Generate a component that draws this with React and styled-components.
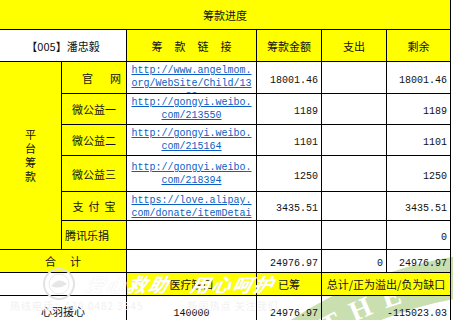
import React from "react";
import styled, { createGlobalStyle } from "styled-components";

const GlobalStyle = createGlobalStyle`
  body {
    margin: 0;
    background: #fff;
  }
`;

const YELLOW = "#ffff00";

const links = [
  { label: "官网", gap: 17, url: "http://www.angelmom.org/WebSite/Child/1388", amount: "18001.46", left: "18001.46", clip: 29 },
  { label: "微公益一", url: "http://gongyi.weibo.com/213550", amount: "1189", left: "1189" },
  { label: "微公益二", url: "http://gongyi.weibo.com/215164", amount: "1101", left: "1101" },
  { label: "微公益三", url: "http://gongyi.weibo.com/218394", amount: "1250", left: "1250" },
  { label: "支付宝", gap: 5, url: "https://love.alipay.com/donate/itemDetail", amount: "3435.51", left: "3435.51", clip: 26 },
];

const heights = [31, 31, 31, 36, 26];

const Frame = styled.div`
  position: relative;
  width: 453px;
  height: 320px;
  overflow: hidden;
`;

const Backdrop = styled.svg`
  position: absolute;
  left: 0;
  top: 0;
  z-index: 0;
`;

const Sheet = styled.table`
  position: relative;
  z-index: 1;
  border-collapse: collapse;
  table-layout: fixed;
  width: 452px;
  margin: -1px 0 0 -1px;
  font-family: "Noto Sans CJK SC", sans-serif;
  font-size: 11px;
  color: #111;
`;

const Row = styled.tr`
  height: ${(p) => p.$h}px;
`;

const Cell = styled.td`
  border: 1px solid #000;
  padding: 0 3px;
  background: ${(p) => (p.$fill ? YELLOW : "transparent")};
  text-align: ${(p) => p.$align || "center"};
  vertical-align: middle;
  overflow: hidden;
  white-space: nowrap;
`;

const Num = styled.span`
  font-family: "Liberation Mono", monospace;
  font-size: 10px;
  display: inline-block;
  padding-top: 3px;
`;

const Spaced = styled.span`
  letter-spacing: ${(p) => p.$gap}px;
  padding-left: ${(p) => p.$gap}px;
`;

const Vertical = styled.span`
  display: inline-block;
  width: 11px;
  white-space: normal;
  word-break: break-all;
  line-height: 14px;
`;

const LinkCell = styled.td`
  border: 1px solid #000;
  padding: 0 4px;
  vertical-align: ${(p) => (p.$clip ? "top" : "middle")};
  text-align: center;
`;

const LinkText = styled.div`
  font-family: "Liberation Mono", monospace;
  font-size: 10px;
  line-height: 13px;
  color: #0b5fc4;
  text-decoration: underline;
  word-break: break-all;
  white-space: normal;
  max-height: ${(p) => (p.$clip ? `${p.$clip}px` : "none")};
  overflow: hidden;
  padding-top: ${(p) => (p.$clip ? "2px" : "0")};
`;

const Stamp = styled.div`
  position: absolute;
  z-index: 2;
  left: 0;
  top: 262px;
  width: 453px;
  height: 58px;
  pointer-events: none;
`;

const Seal = styled.svg`
  position: absolute;
  left: 42px;
  top: 5px;
`;

const Motto = styled.div`
  position: absolute;
  left: 86px;
  top: 8px;
  font-family: "Noto Sans CJK SC", sans-serif;
  font-size: 19px;
  font-weight: 700;
  font-style: italic;
  letter-spacing: 2px;
  color: #fff;
  text-shadow: 0 0 1px #e4e4e4;
  transform: skewX(-14deg);
`;

const Faint = styled.div`
  position: absolute;
  left: 10px;
  top: 36px;
  font-family: "Noto Sans CJK SC", sans-serif;
  font-size: 10px;
  color: #f1f1f1;
  letter-spacing: 1px;
`;

const App = () => (
  <Frame>
    <GlobalStyle />
    <Backdrop width="453" height="320">
      <defs>
        <path id="ring" d="M 134 672 A 388 388 0 0 1 910 672" />
      </defs>
      <circle cx="522" cy="672" r="400" fill="none" stroke="#cadfb0" strokeWidth="42" />
      <text fill="#fff" fontFamily="Liberation Serif, serif" fontSize="28" fontWeight="700" letterSpacing="12">
        <textPath href="#ring" startOffset="405">THE CH</textPath>
      </text>
    </Backdrop>

    <Sheet>
      <colgroup>
        <col style={{ width: 62 }} />
        <col style={{ width: 65 }} />
        <col style={{ width: 130 }} />
        <col style={{ width: 65 }} />
        <col style={{ width: 65 }} />
        <col style={{ width: 64 }} />
      </colgroup>
      <tbody>
        <Row $h={30}>
          <Cell colSpan={6} $fill>筹款进度</Cell>
        </Row>
        <Row $h={32}>
          <Cell colSpan={2}>【005】潘忠毅</Cell>
          <Cell $fill><Spaced $gap={12}>筹款链接</Spaced></Cell>
          <Cell $fill>筹款金额</Cell>
          <Cell $fill>支出</Cell>
          <Cell $fill>剩余</Cell>
        </Row>
        {links.map((l, i) => (
          <Row key={l.label} $h={heights[i]}>
            {i === 0 && (
              <Cell rowSpan={6} $fill>
                <Vertical>平台筹款</Vertical>
              </Cell>
            )}
            <Cell $fill>{l.gap ? <Spaced $gap={l.gap}>{l.label}</Spaced> : l.label}</Cell>
            <LinkCell $clip={l.clip}>
              <LinkText $clip={l.clip}>{l.url}</LinkText>
            </LinkCell>
            <Cell $align="right"><Num>{l.amount}</Num></Cell>
            <Cell />
            <Cell $align="right"><Num>{l.left}</Num></Cell>
          </Row>
        ))}
        <Row $h={29}>
          <Cell $fill $align="left">腾讯乐捐</Cell>
          <Cell />
          <Cell />
          <Cell />
          <Cell $align="right"><Num>0</Num></Cell>
        </Row>
        <Row $h={23}>
          <Cell colSpan={2} $fill><Spaced $gap={14}>合计</Spaced></Cell>
          <Cell />
          <Cell $align="right"><Num>24976.97</Num></Cell>
          <Cell $align="right"><Num>0</Num></Cell>
          <Cell $align="right"><Num>24976.97</Num></Cell>
        </Row>
        <Row $h={23}>
          <Cell colSpan={2} />
          <Cell $fill>医疗缺口</Cell>
          <Cell $fill>已筹</Cell>
          <Cell colSpan={2} $fill>总计/正为溢出/负为缺口</Cell>
        </Row>
        <Row $h={30}>
          <Cell colSpan={2}>心羽援心</Cell>
          <Cell><Num>140000</Num></Cell>
          <Cell $align="right"><Num>24976.97</Num></Cell>
          <Cell colSpan={2} $align="right"><Num>-115023.03</Num></Cell>
        </Row>
      </tbody>
    </Sheet>

    <Stamp>
      <Seal width="34" height="34" viewBox="0 0 34 34">
        <circle cx="17" cy="17" r="15" fill="none" stroke="#e2e2e2" strokeWidth="2" />
        <circle cx="17" cy="17" r="10" fill="none" stroke="#ebebeb" strokeWidth="1" />
        <path d="M9 19 Q17 9 25 17 Q17 23 9 19 Z" fill="#e6e6e6" />
      </Seal>
      <Motto>爱心救助　用心呵护</Motto>
      <Faint>热线电话：139 0482 3545　　　　新闻热点 关注我们</Faint>
    </Stamp>
  </Frame>
);

export default App;
